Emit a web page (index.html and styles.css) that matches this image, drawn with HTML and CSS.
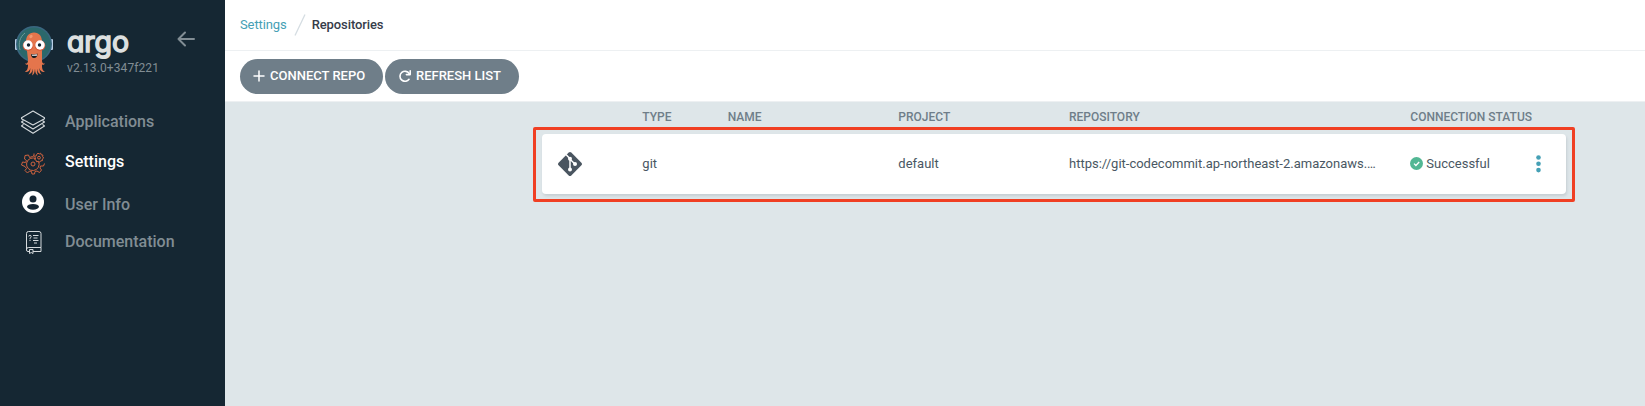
FILE: index.html
```html
<!DOCTYPE html>
<html lang="en">
<head>
<meta charset="utf-8">
<title>Repositories</title>
<link rel="stylesheet" href="styles.css">
</head>
<body>
<div class="app">
  <aside class="sidebar">
    <div class="brand">
      <svg class="mascot" width="40" height="52" viewBox="0 0 40 52">
        <rect x="1" y="14" width="3" height="11" rx="1" fill="#b9cfe6"/>
        <rect x="36" y="14" width="3" height="11" rx="1" fill="#b9cfe6"/>
        <circle cx="20" cy="19" r="18" fill="#3a6680"/>
        <circle cx="20" cy="19" r="16.6" fill="#2b686b"/>
        <path d="M6 25c-2-7 0-13 5-17" fill="none" stroke="#6f9a9a" stroke-width="1"/>
        <path d="M12 17c0-6 3-9.500 8-9.500s8 3.500 8 9.500v18c0 3 1 4 3 3.500-1 1.500-2 1.500-3 1 0 3 0 6 3 7.500-3 .5-5-1-5.500-4 0 3 .5 5 2 6.500-3-.5-4-3-4.500-6 0 3 .3 5 1 7-2-1-3-3-3-7-.3 4-1 6-3 7 .7-2 .8-4 .8-7-.5 3-1.500 5.500-4.500 6 1.500-1.500 2-3.500 2-6.500-.5 3-2.500 4.500-5.500 4 3-1.500 3.200-4.500 3.200-7.500-1 .5-2 .5-3-1 2 .5 3-.5 3-3.500z" fill="#e4754c"/>
        <ellipse cx="17" cy="11.500" rx="1.800" ry="1.400" fill="#f09a72" transform="rotate(-35 17 11.500)"/>
        <circle cx="14" cy="20.500" r="5.300" fill="#d85a3c"/>
        <circle cx="26" cy="20.500" r="5.300" fill="#d85a3c"/>
        <circle cx="14" cy="20" r="4.700" fill="#fff"/>
        <circle cx="26" cy="20" r="4.700" fill="#fff"/>
        <circle cx="14.500" cy="20" r="1.700" fill="#152532"/>
        <circle cx="25.500" cy="20" r="1.700" fill="#152532"/>
        <path d="M17 29q3 1 6.500-.5c0 3-1.500 4.500-3.500 4.500s-3-2-3-4z" fill="#111a20"/>
        <path d="M17.600 29.400q2.500.6 5.300-.2v1.600h-4.800z" fill="#fff"/>
      </svg>
      <div class="brand-text">
        <div class="wordmark">argo</div>
        <div class="version">v2.13.0+347f221</div>
      </div>
      <svg class="collapse" width="18" height="16" viewBox="0 0 18 16" fill="none" stroke="#818d94" stroke-width="2" stroke-linecap="round" stroke-linejoin="round"><path d="M17 8H1.500M8 1.500L1.500 8L8 14.500"/></svg>
    </div>
    <nav class="menu">
      <a class="item apps">
        <svg width="26" height="26" viewBox="0 0 26 26" fill="none" stroke="#d5dadd" stroke-width="1.100" stroke-linejoin="round"><path d="M13 2L24.500 8.700V9.700L13 16L1.500 9.700V8.700z"/><path d="M3.500 11.500L1.500 13L13 20L24.500 13L22.500 11.500M3.500 15.300L1.500 17L13 24.200L24.500 17L22.500 15.300"/></svg>
        <span>Applications</span>
      </a>
      <a class="item settings active">
        <svg width="26" height="26" viewBox="0 0 26 26" fill="none" stroke="#d0633f" stroke-width="1" stroke-linejoin="round"><path d="M14 6.500L12.500 7.500L9.500 8.500L8.500 6L5 6.500L4.500 10L6.500 11.500L5.500 13.500L2.500 13L1.500 16L5 17.500L6.500 19.500L5 21.500L7.500 24L9.500 22L11.500 22.500L12 25H14.500L15 22.500L17 22L19.500 23.500L21.500 21L20 19L20.500 17L23.500 17L24.500 14.500M14 4.500V7.500"/><path d="M16 9.800A6.300 6.300 0 1 0 18.500 12.500"/><circle cx="13" cy="15" r="2"/><path d="M18 4.200l1.200.8 1.500-.8.500 1.600 1.700.3-.3 1.700 1.100 1.200-1.400 1 .1 1.700-1.700.1-1 1.400-1.400-.9-1.700.5-.5-1.600-1.500-.8.700-1.500-.6-1.600 1.600-.5.500-1.600z"/><circle cx="19" cy="8.700" r="1.400"/></svg>
        <span>Settings</span>
      </a>
      <a class="item user">
        <svg width="26" height="26" viewBox="0 0 26 26"><circle cx="13" cy="13" r="11" fill="#fff"/><circle cx="13" cy="10" r="3.500" fill="#152532"/><ellipse cx="13" cy="17.800" rx="6" ry="2.900" fill="#152532"/></svg>
        <span>User Info</span>
      </a>
      <a class="item docs">
        <svg width="26" height="26" viewBox="0 0 26 26" fill="none" stroke="#d5dadd" stroke-width="1"><path d="M9.500 22.500H8Q6.500 22.500 6.500 21V4.500Q6.500 2.500 8.500 2.500H19Q21 2.500 21 4.500V18.500H8.500Q6.500 18.500 6.500 20.500M21 18.500V22.500H13M9.500 20.500V24.500L11.200 23.500L13 24.500V20.500z" stroke-linejoin="round"/><path d="M8.800 7.500q0-1.200 1.200-1.200t1.200 1.200q0 1-1.200 1.700v1M10 11v1"/><path d="M13 6.500h5.500M13.500 9h4M13 11.500h5.500M14 14h3"/></svg>
        <span>Documentation</span>
      </a>
    </nav>
  </aside>
  <main class="main">
    <header class="breadcrumbs">
      <a class="crumb-link">Settings</a>
      <svg class="slash" width="12" height="22" viewBox="0 0 12 22"><path d="M11 .5L1 21.500" stroke="#d5dde2" stroke-width="1.300"/></svg>
      <span class="crumb-current">Repositories</span>
    </header>
    <div class="toolbar">
      <button class="btn connect"><svg width="12" height="12" viewBox="0 0 12 12" stroke="#fff" stroke-width="1.500" stroke-linecap="round"><path d="M6 1v10M1 6h10"/></svg><span>CONNECT REPO</span></button>
      <button class="btn refresh"><svg width="12" height="12" viewBox="0 0 12 12" fill="none" stroke="#fff" stroke-width="1.600"><path d="M10.200 3.600A5 5 0 1 0 10 9.300" stroke-linecap="round"/><path d="M11.200.8V4.600H7.400" stroke-linejoin="round" stroke-linecap="round"/></svg><span>REFRESH LIST</span></button>
    </div>
    <section class="content">
      <div class="grid head">
        <span></span><span>TYPE</span><span>NAME</span><span>PROJECT</span><span>REPOSITORY</span><span>CONNECTION STATUS</span>
      </div>
      <div class="highlight">
        <div class="grid card">
          <span class="cell-icon"><svg width="24" height="24" viewBox="0 0 24 24"><path d="M10.700.6q1.300-1.200 2.600 0l10.100 10.100q1.200 1.300 0 2.600L13.300 23.400q-1.300 1.200-2.600 0L.6 13.300q-1.200-1.300 0-2.600z" fill="#4a5560"/><path d="M8 2.500l4 4.200v11M12 7.200l5 4.800" fill="none" stroke="#fff" stroke-width="1.500"/><circle cx="12" cy="6.700" r="2" fill="#fff"/><circle cx="12" cy="17.500" r="2" fill="#fff"/><circle cx="17" cy="12" r="2" fill="#fff"/></svg></span>
          <span>git</span><span></span><span>default</span>
          <span class="repo-url">https://git-codecommit.ap-northeast-2.amazonaws.…</span>
          <span class="status"><svg width="13" height="13" viewBox="0 0 13 13"><circle cx="6.500" cy="6.500" r="6.500" fill="#52b794"/><path d="M4 6.600l1.900 1.900L9.200 5" fill="none" stroke="#fff" stroke-width="1.300"/></svg><span>Successful</span></span>
          <svg class="dots" width="5" height="18" viewBox="0 0 5 18" fill="#45a0b5"><circle cx="2.500" cy="2.500" r="2.300"/><circle cx="2.500" cy="8.800" r="2.300"/><circle cx="2.500" cy="15.100" r="2.300"/></svg>
        </div>
      </div>
    </section>
  </main>
</div>
</body>
</html>
```
FILE: styles.css
```css
* { box-sizing: border-box; }
body { margin: 0; font-family: Roboto, "Liberation Sans", sans-serif; background: #dee6e9; }
svg { display: block; flex: none; }
.app { display: flex; width: 1645px; height: 406px; overflow: hidden; }

.sidebar { width: 225px; flex: none; background: #152733; }
.brand { display: flex; height: 107px; padding: 25px 0 0 14px; }
.brand-text { width: 109px; margin-left: 13px; }
.wordmark {
  height: 35px; line-height: 34px; font-family: Inter, sans-serif; font-size: 28.5px; font-weight: 400;
  font-feature-settings: "cv11"; letter-spacing: -.1px; color: #dde0e0; -webkit-text-stroke: 1.5px #dde0e0;
}
.version { font-size: 12px; line-height: 16px; letter-spacing: .1px; color: #818d94; white-space: nowrap; }
.collapse { margin: 6px 0 0 1px; }
.menu { display: flex; flex-direction: column; }
.item { display: flex; align-items: center; gap: 12px; padding-left: 20px; font-size: 16px; font-weight: 500; line-height: 26px; color: #818d94; }
.item span { padding-left: 7px; }
.apps { height: 30px; }
.settings { height: 50px; }
.user { height: 36px; }
.user svg { margin-bottom: 7px; }
.docs { height: 38px; }
.active { color: #fff; }

.main { flex: 1; min-width: 0; }
.breadcrumbs { display: flex; align-items: center; height: 51px; padding: 0 15px 1px; background: #fff; border-bottom: 1px solid #edf0f2; font-size: 13px; }
.crumb-link { color: #45a0b5; letter-spacing: -.1px; }
.slash { margin: 0 6px 0 7px; }
.crumb-current { color: #363c4a; font-weight: 500; letter-spacing: -.1px; }
.toolbar { display: flex; gap: 2px; height: 51px; padding: 8px 15px 0; background: #fff; border-bottom: 1px solid #edf0f2; }
.btn { display: flex; align-items: center; gap: 5px; height: 35px; padding: 0 0 2px 13px; border: 0; border-radius: 18px; background: #6f7e89; color: #fff; font: 500 13px Roboto, sans-serif; white-space: nowrap; }
.connect { width: 143px; }
.refresh { width: 134px; padding-left: 14px; }

.content { padding: 7px 70px 0 308px; }
.grid { display: grid; grid-template-columns: 85.33px 85.33px 170.67px 170.67px 341.33px 122px auto; align-items: center; }
.head { height: 18px; padding: 0 0 3px 24px; font-size: 12px; font-weight: 500; color: #6f7e89; white-space: nowrap; }
.highlight { height: 75px; padding: 4px 6px 0; border: 3px solid #f03f23; border-radius: 2px; }
.card { height: 60px; padding: 0 0 1px 15px; border-radius: 4px; background: #fff; box-shadow: 1px 2px 3px #c6ced3; font-size: 13px; color: #495763; }
.cell-icon { padding: 1px 0 0 1px; }
.repo-url { white-space: nowrap; }
.status { display: flex; align-items: center; gap: 3px; }
.dots { margin-left: 4px; }
```
